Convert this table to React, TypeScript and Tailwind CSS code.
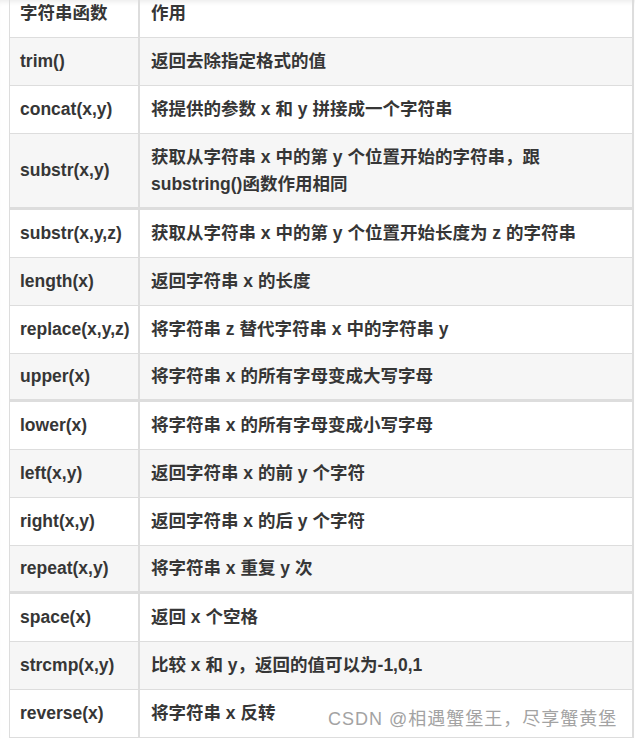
const rows: { fn: string; desc: string; tall?: boolean; thick?: boolean }[] = [
  { fn: "trim()", desc: "返回去除指定格式的值" },
  { fn: "concat(x,y)", desc: "将提供的参数 x 和 y 拼接成一个字符串" },
  { fn: "substr(x,y)", desc: "获取从字符串 x 中的第 y 个位置开始的字符串，跟 substring()函数作用相同", tall: true, thick: true },
  { fn: "substr(x,y,z)", desc: "获取从字符串 x 中的第 y 个位置开始长度为 z 的字符串" },
  { fn: "length(x)", desc: "返回字符串 x 的长度" },
  { fn: "replace(x,y,z)", desc: "将字符串 z 替代字符串 x 中的字符串 y" },
  { fn: "upper(x)", desc: "将字符串 x 的所有字母变成大写字母", thick: true },
  { fn: "lower(x)", desc: "将字符串 x 的所有字母变成小写字母" },
  { fn: "left(x,y)", desc: "返回字符串 x 的前 y 个字符" },
  { fn: "right(x,y)", desc: "返回字符串 x 的后 y 个字符" },
  { fn: "repeat(x,y)", desc: "将字符串 x 重复 y 次", thick: true },
  { fn: "space(x)", desc: "返回 x 个空格" },
  { fn: "strcmp(x,y)", desc: "比较 x 和 y，返回的值可以为-1,0,1" },
  { fn: "reverse(x)", desc: "将字符串 x 反转" },
];

export default function App() {
  return (
    <div
      className="relative w-[635px] h-[739px] overflow-hidden bg-white text-[#363636] font-bold text-[17.5px] shadow-[inset_0_5px_5px_-3px_rgba(0,0,0,0.08)]"
      style={{ fontFamily: '"Liberation Sans", "Noto Sans CJK SC", sans-serif' }}
    >
      <div className="ml-[9px] w-[625px] border-l border-r-2 border-[#dddddd]">
        <div className="grid grid-cols-[130px_1fr] h-[38px] border-b border-[#dddddd]">
          <div className="flex items-center pl-[10px] pb-[10px] border-r-2 border-[#dddddd]">字符串函数</div>
          <div className="flex items-center pl-[11px] pb-[10px]">作用</div>
        </div>
        {rows.map((r, i) => (
          <div
            key={r.fn}
            className={`grid grid-cols-[130px_1fr] ${r.tall ? "h-[76px]" : "h-[48px]"} ${r.thick ? "border-b-[3px]" : "border-b"} border-[#dddddd] ${i % 2 === 0 ? "bg-[#f6f6f6]" : "bg-white"}`}
          >
            <div className="flex items-center pl-[10px] border-r-2 border-[#dddddd] whitespace-nowrap">{r.fn}</div>
            <div className="flex items-center pl-[11px] pr-[40px] leading-[27px]">{r.desc}</div>
          </div>
        ))}
      </div>
      <div className="absolute left-[328px] top-[707px] text-[18px] tracking-[1px] font-normal text-[#a3a3a3] whitespace-nowrap leading-[24px]">
        CSDN @相遇蟹堡王，尽享蟹黄堡
      </div>
    </div>
  );
}
